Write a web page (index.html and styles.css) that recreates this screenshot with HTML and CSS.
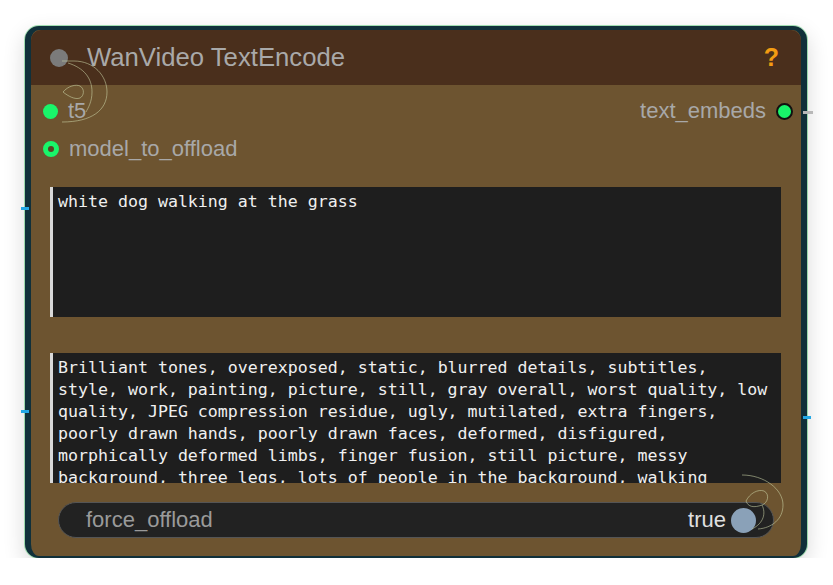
FILE: index.html
```html
<!DOCTYPE html>
<html lang="en">
<head>
    <meta charset="UTF-8">
    <title>WanVideo TextEncode</title>
    <link rel="stylesheet" href="styles.css">
</head>
<body>
    <div class="canvas">
        <div class="node">
            <span class="wire wire-left-a"></span>
            <span class="wire wire-left-b"></span>
            <span class="wire wire-right-b"></span>
            <span class="wire wire-out"></span>

            <div class="title-bar">
                <span class="title-dot"></span>
                <span class="title">WanVideo TextEncode</span>
                <span class="help">?</span>
            </div>

            <div class="node-body">
                <div class="slots">
                    <div class="slot-row">
                        <div class="slot">
                            <span class="dot"></span>
                            <span class="slot-name">t5</span>
                        </div>
                        <div class="slot output">
                            <span class="slot-name">text_embeds</span>
                            <span class="dot dot-out"></span>
                        </div>
                    </div>
                    <div class="slot-row">
                        <div class="slot">
                            <span class="dot dot-ring"></span>
                            <span class="slot-name">model_to_offload</span>
                        </div>
                    </div>
                </div>

                <textarea class="prompt" spellcheck="false">white dog walking at the grass</textarea>
                <textarea class="prompt negative" spellcheck="false">Brilliant tones, overexposed, static, blurred details, subtitles, style, work, painting, picture, still, gray overall, worst quality, low quality, JPEG compression residue, ugly, mutilated, extra fingers, poorly drawn hands, poorly drawn faces, deformed, disfigured, morphically deformed limbs, finger fusion, still picture, messy background, three legs, lots of people in the background, walking backwards</textarea>

                <div class="toggle-widget">
                    <span class="widget-label">force_offload</span>
                    <span class="widget-value">true</span>
                    <span class="knob"></span>
                </div>
            </div>

            <!-- little swirl marks drawn over the node -->
            <svg class="swirl swirl-top" width="50" height="66" viewBox="0 0 50 66">
                <path d="M2 3 L14 3 C34 3 47 18 47 34 C47 52 32 64 2 64" />
                <path d="M8 5 C24 10 32 20 32 34 C32 44 28 50 26 54" />
                <path d="M3 34 C8 28 16 26 20 28 C25 31 24 38 20 40 C15 42 8 38 3 34 Z" />
            </svg>
            <svg class="swirl swirl-bottom" width="46" height="58" viewBox="0 0 46 58">
                <path d="M2 2 C24 2 43 16 43 32 C43 46 32 55 18 56" />
                <path d="M6 28 C10 20 18 16 24 18 C30 21 28 30 22 32 C14 35 8 34 6 28 Z" />
                <path d="M22 32 C26 40 24 50 12 56" />
            </svg>
        </div>
    </div>
</body>
</html>
```

FILE: styles.css
```css
body {
    margin: 0;
    background: #ffffff;
    font-family: "Liberation Sans", Arial, sans-serif;
}
.canvas {
    padding: 26px 0 0 25px;
}
.node {
    position: relative;
    width: 770px;
    height: 526px;
    border-style: solid;
    border-color: #10303a;
    border-width: 4px 6px 2px 6px;
    border-radius: 14px;
    background: #6d5430;
    box-shadow: 0 0 0 1px rgba(90, 200, 120, 0.55), 0 8px 22px rgba(0, 0, 0, 0.16);
}
.title-bar {
    display: flex;
    align-items: center;
    height: 55px;
    padding: 0 22px 0 19px;
    background: #4a2f1c;
    border-radius: 10px 10px 0 0;
}
.title-dot {
    width: 18px;
    height: 18px;
    border-radius: 50%;
    background: #7b7b7b;
}
.title {
    margin-left: 19px;
    font-size: 25.7px;
    color: #a9a9a9;
    flex: 1;
}
.help {
    font-size: 25px;
    font-weight: bold;
    color: #f39c12;
}
.node-body {
    padding: 7px 0 0 0;
}
.slots {
    display: flex;
    flex-direction: column;
}
.slot-row {
    display: flex;
    justify-content: space-between;
    align-items: center;
    height: 38px;
}
.slot {
    display: flex;
    align-items: center;
    gap: 10px;
    padding-left: 12px;
}
.slot.output {
    padding-left: 0;
    padding-right: 8px;
}
.slot-name {
    font-size: 22px;
    color: #a8a8a8;
}
.dot {
    width: 15px;
    height: 15px;
    border-radius: 50%;
    background: #19f56a;
    box-sizing: border-box;
}
.dot-ring {
    width: 16px;
    height: 16px;
    border: 5px solid #19f56a;
    background: #5a4424;
}
.dot-out {
    width: 17px;
    height: 17px;
    border: 2px solid #111;
}
.prompt {
    display: block;
    width: 731px;
    height: 130px;
    margin: 19px 0 0 19px;
    padding: 4px 8px 0 5px;
    box-sizing: border-box;
    border: none;
    border-left: 3px solid #d9d9d9;
    background: #1e1e1e;
    color: #f0f0f0;
    font-family: "DejaVu Sans Mono", "Liberation Mono", monospace;
    font-size: 16.6px;
    line-height: 22px;
    resize: none;
    overflow: hidden;
    outline: none;
}
.prompt.negative {
    margin-top: 36px;
}
.toggle-widget {
    display: flex;
    align-items: center;
    width: 716px;
    height: 36px;
    margin: 19px 0 0 27px;
    padding: 0 17px 0 27px;
    box-sizing: border-box;
    background: #222222;
    border: 1px solid #555555;
    border-radius: 18px;
}
.widget-label {
    flex: 1;
    font-size: 22px;
    color: #9a9a9a;
}
.widget-value {
    font-size: 22px;
    color: #e0e0e0;
    margin-right: 5px;
}
.knob {
    width: 25px;
    height: 25px;
    border-radius: 50%;
    background: #8aa1b8;
}
.wire {
    position: absolute;
    height: 3px;
    background: #22a8e6;
}
.wire-left-a {
    left: -10px;
    top: 177px;
    width: 8px;
}
.wire-left-b {
    left: -10px;
    top: 380px;
    width: 8px;
}
.wire-right-b {
    right: -10px;
    top: 386px;
    width: 8px;
}
.wire-out {
    right: -12px;
    top: 81px;
    width: 10px;
    background: #b8b8b8;
}
.swirl {
    position: absolute;
    fill: none;
    stroke: rgba(205, 215, 170, 0.55);
    stroke-width: 1;
}
.swirl-top {
    left: 29px;
    top: 28px;
}
.swirl-bottom {
    left: 709px;
    top: 443px;
}
```
